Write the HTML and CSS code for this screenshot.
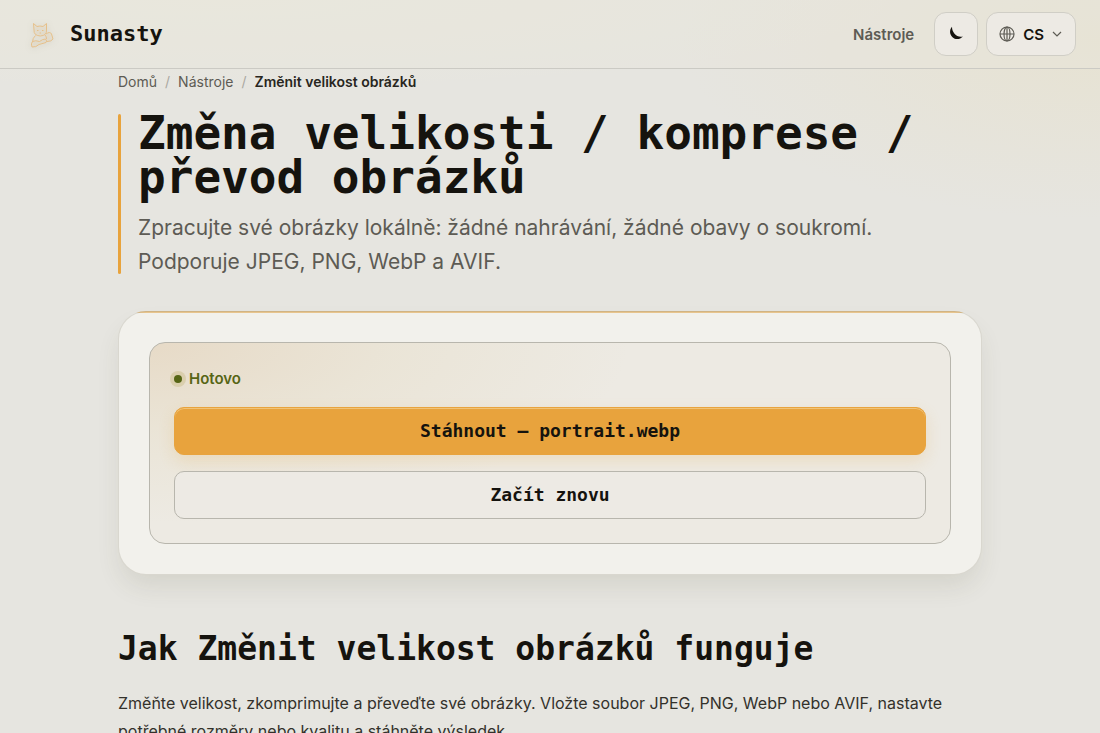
FILE: index.html
```html
<!DOCTYPE html>
<html lang="cs">
<head>
<meta charset="utf-8">
<meta name="viewport" content="width=device-width, initial-scale=1">
<title>Sunasty</title>
<link rel="stylesheet" href="styles.css">
</head>
<body>
<header class="site-header">
  <a class="brand" href="#">
    <svg class="brand-logo" viewBox="0 0 28 28" aria-hidden="true">
      <path d="M6 10 5.500 3.500 9 6.500Q12 5.500 15 6.500L18.500 3.500 18.500 10Q19 15.500 12.300 16 5.500 15.500 6 10Z"/>
      <path d="M9 10.500h1.500M14 10.500h1.500M11.500 13h1.600M7.500 15.500Q4.500 18 4.500 22M17 15q1.500 1.500 1.500 4"/>
      <path d="M18 14q4-3 5.500 0l1.500 5q-1.500 2.500-6 2.500M4.500 21.500q-2 2-.5 5.500 4 .5 7-2.500l7-2q1.500-1.500-.5-3.500-3 0-6 2.500-4-1.500-7 0Z"/>
    </svg>
    <span>Sunasty</span>
  </a>
  <nav class="header-nav">
    <a class="nav-link" href="#">Nástroje</a>
    <div class="header-controls">
      <button class="control control-icon" type="button" aria-label="Tmavý režim">
        <svg class="icon-moon" viewBox="0 0 16 16" aria-hidden="true"><path d="M4 .8C1.200 4 1.500 8.500 4.500 11.200 7.500 14 12 13.500 15 10.500 11.500 11.200 8.500 10.200 6.500 7.700 4.800 5.500 4 3.500 4 .8Z"/></svg>
      </button>
      <button class="control control-lang" type="button" aria-haspopup="true">
        <svg class="icon-globe" viewBox="0 0 16 16" aria-hidden="true"><circle cx="8" cy="8" r="7"/><ellipse cx="8" cy="8" rx="3" ry="7"/><path d="M1 8h14M8 1v14"/></svg>
        <span>CS</span>
        <svg class="icon-chevron" viewBox="0 0 10 10" aria-hidden="true"><path d="m1 3 4 4 4-4"/></svg>
      </button>
    </div>
  </nav>
</header>
<main class="page">
  <nav class="breadcrumb" aria-label="Drobečková navigace">
    <a href="#">Domů</a><span class="separator">/</span><a href="#">Nástroje</a><span class="separator">/</span><span class="current" aria-current="page">Změnit velikost obrázků</span>
  </nav>
  <section class="hero">
    <div class="hero-text">
      <h1>Změna velikosti / komprese / převod obrázků</h1>
      <p>Zpracujte své obrázky lokálně: žádné nahrávání, žádné obavy o soukromí. Podporuje JPEG, PNG, WebP a AVIF.</p>
    </div>
  </section>
  <section class="card">
    <div class="result">
      <p class="status">Hotovo</p>
      <button class="button button-primary" type="button">Stáhnout — portrait.webp</button>
      <button class="button button-secondary" type="button">Začít znovu</button>
    </div>
  </section>
  <section class="about">
    <h2>Jak Změnit velikost obrázků funguje</h2>
    <p>Změňte velikost, zkomprimujte a převeďte své obrázky. Vložte soubor JPEG, PNG, WebP nebo AVIF, nastavte potřebné rozměry nebo kvalitu a stáhněte výsledek.</p>
  </section>
</main>
</body>
</html>
```
FILE: styles.css
```css
:root {
  --ink: #15130e;
  --muted: #5d5b54;
  --accent: #e8a33d;
  --mono: "DejaVu Sans Mono", "Liberation Mono", monospace;
  --sans: Inter, "Liberation Sans", sans-serif;
}

* { box-sizing: border-box; }

body {
  margin: 0;
  min-height: 100vh;
  color: var(--ink);
  font-family: var(--sans);
  background:
    radial-gradient(ellipse 420px 180px at 100% 40px, rgba(232, 218, 170, 0.26), transparent),
    radial-gradient(ellipse 700px 90px at 20% 0, rgba(240, 238, 215, 0.4), transparent),
    #e6e5e0;
}

h1, h2, p { margin: 0; }
a { color: inherit; text-decoration: none; }
button { font: inherit; color: inherit; cursor: pointer; }

.site-header {
  display: flex;
  align-items: center;
  justify-content: space-between;
  padding: 12px 24px;
  border-bottom: 1px solid #cbcac4;
  background: rgba(232, 228, 220, 0.35);
}

.brand {
  display: flex;
  align-items: center;
  gap: 14px;
  padding-left: 4px;
  font: bold 22px/28px var(--mono);
}

.brand-logo {
  width: 28px;
  height: 28px;
  fill: rgba(232, 163, 61, 0.06);
  stroke: #e6c08a;
  stroke-width: 1;
  stroke-linejoin: round;
  filter: drop-shadow(0 1px 3px rgba(90, 80, 50, 0.2));
}

.header-nav { display: flex; align-items: center; gap: 20px; }
.nav-link { color: var(--muted); font-size: 15px; font-weight: 600; }
.header-controls { display: flex; gap: 8px; }

.control {
  display: flex;
  align-items: center;
  justify-content: center;
  height: 44px;
  padding: 0;
  border: 1px solid #d0cec6;
  border-radius: 12px;
  background: #edeae4;
  font-size: 15px;
  font-weight: 600;
}

.control-icon { width: 44px; }
.control-lang { gap: 8px; padding: 0 13px 0 12px; }
.icon-moon { width: 16px; height: 16px; fill: var(--ink); }
.icon-globe, .icon-chevron { fill: none; stroke: var(--muted); stroke-width: 1.2; }
.icon-globe { width: 16px; height: 16px; }
.icon-chevron { width: 10px; height: 10px; }

.page { max-width: 912px; margin: 0 auto; padding: 3px 24px 48px; }

.breadcrumb {
  display: flex;
  gap: 8px;
  color: var(--muted);
  font-size: 14px;
  line-height: 20px;
}

.separator { color: #aaa8a1; }
.current { color: #282620; font-weight: 600; }

.hero { display: flex; gap: 17px; margin-top: 19px; }

.hero::before {
  content: "";
  flex: none;
  width: 3px;
  margin: 3px 0 5px;
  border-radius: 2px;
  background: var(--accent);
}

.hero-text { display: grid; gap: 12px; }
.hero h1 { font: bold 46px/44px var(--mono); }

.hero p {
  max-width: 760px;
  color: var(--muted);
  font-size: 21px;
  line-height: 34px;
}

.card {
  margin-top: 32px;
  padding: 30px;
  border: 1px solid rgba(120, 115, 95, 0.2);
  border-radius: 28px;
  background:
    linear-gradient(#e8c58e, #e8c58e) top / 100% 2px no-repeat border-box,
    #f2f1ec;
  box-shadow: 0 14px 26px -4px rgba(70, 70, 45, 0.12);
}

.result {
  display: grid;
  gap: 16px;
  padding: 24px;
  border: 1px solid #b8b6ad;
  border-radius: 16px;
  background:
    radial-gradient(ellipse 60% 90% at 0 0, rgba(218, 185, 140, 0.32), rgba(222, 204, 160, 0.18) 50%, transparent),
    #edeae3;
}

.status {
  display: flex;
  align-items: center;
  gap: 7px;
  color: #566515;
  font-size: 15px;
  font-weight: 600;
  line-height: 24px;
}

.status::before {
  content: "";
  width: 8px;
  height: 8px;
  border-radius: 50%;
  background: #566515;
  box-shadow: 0 0 0 4px rgba(170, 150, 60, 0.22);
}

.button {
  min-height: 48px;
  padding: 8px 16px;
  border: 1px solid #b8b6ad;
  border-radius: 10px;
  background: transparent;
  font: bold 18px/24px var(--mono);
}

.button-primary {
  border-color: var(--accent);
  background: var(--accent);
  box-shadow: 0 6px 16px rgba(232, 163, 61, 0.2), inset 0 1px #f1c377;
}

.button-secondary { background: #edeae4; }

.about { display: grid; gap: 20px; margin-top: 54px; }
.about h2 { font: bold 33px/40px var(--mono); }
.about p { color: #33312b; font-size: 16px; line-height: 28px; }
```
